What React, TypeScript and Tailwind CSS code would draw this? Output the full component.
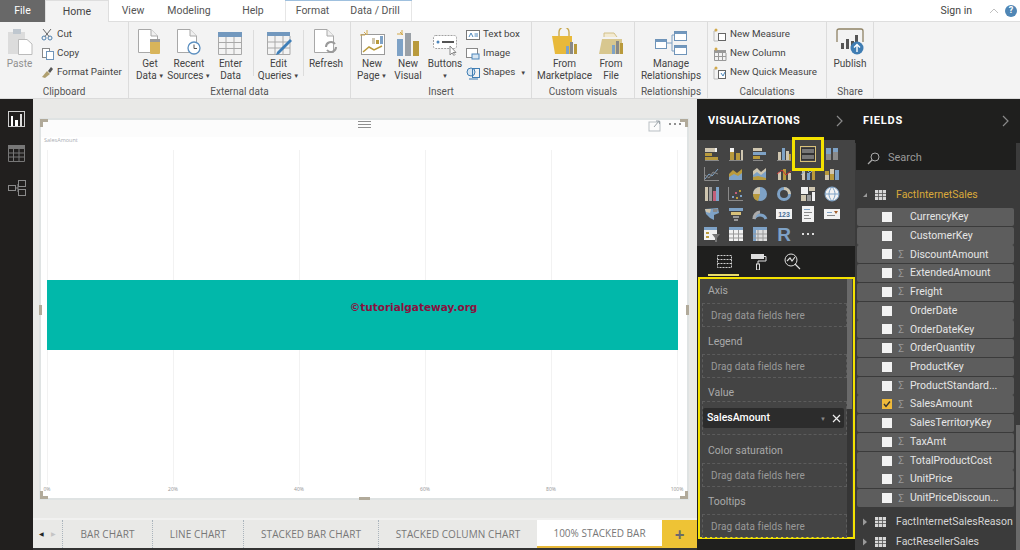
import React from "react";

const G = "#b99a3c", B = "#7ea2c6", T = "#cfc6b0", W = "#f2f2f2", D = "#8a8a8a";
const Svg = ({ s = 16, w, h, vb, children }: { s?: number; w?: number; h?: number; vb?: string; children: React.ReactNode }) => (
  <svg width={w ?? s} height={h ?? s} viewBox={vb ?? `0 0 ${w ?? s} ${h ?? s}`} fill="none" className="block shrink-0">{children}</svg>
);
const R = (x: number, y: number, w: number, h: number, c: string) => <rect x={x} y={y} width={w} height={h} fill={c} />;

const Doc = ({ children }: { children?: React.ReactNode }) => (
  <Svg w={26} h={28}>
    <path d="M1.5 1.5H14L20.5 8V24.5H1.5Z" fill="#fff" stroke="#a8a8a8" />
    <path d="M14 1.5V8H20.5" stroke="#a8a8a8" fill="#f0f0f0" />
    {children}
  </Svg>
);
const ico: Record<string, React.ReactNode> = {
  paste: (
    <Svg w={26} h={28}>
      <rect x="1" y="4" width="17" height="22" fill="#dcdcdc" />
      <rect x="6" y="1" width="8" height="5" fill="#bfc7cf" />
      <path d="M11.5 11.5H20L25 16V26.5H11.5Z" fill="#fff" stroke="#bbb" />
    </Svg>
  ),
  data: (
    <Doc>
      <rect x="13" y="11" width="10" height="15" rx="1" fill="#d8b45a" />
      <rect x="13" y="11" width="10" height="3" fill="#9a9a9a" />
    </Doc>
  ),
  recent: (
    <Doc>
      <circle cx="18" cy="20" r="6" fill="#fff" stroke="#5b8fc0" strokeWidth="1.3" />
      <path d="M18 16.5V20.5H21" stroke="#555" />
    </Doc>
  ),
  enter: (
    <Svg w={25} h={24}>
      {R(0, 0, 24, 5, "#7298be")}
      <path d="M.5 5V22.5H23.5V5M.5 10.5H23.5M.5 16.5H23.5M8 5V22.5M16 5V22.5" stroke="#a9a9a9" />
    </Svg>
  ),
  edit: (
    <Svg w={26} h={25}>
      {R(1, 1, 23, 4, "#7298be")}
      <path d="M1.5 5V23.5H24V5M1.5 11H24M1.5 17H24M9 5V23.5M17 5V23.5" stroke="#a9a9a9" />
      <path d="M11 21L24 8L26 10L13 23L10 24Z" fill="#3f7fb8" />
    </Svg>
  ),
  refresh: (
    <Doc>
      <path d="M13 19a5 5 0 0 1 9-3M23 19a5 5 0 0 1-9 3" stroke="#9a9a9a" strokeWidth="2" />
    </Doc>
  ),
  newpage: (
    <Svg w={26} h={27}>
      <rect x="2.5" y="5.5" width="23" height="20" fill="#fff" stroke="#9a9a9a" />
      <path d="M5 3l3 3M8 1v5M1 6h5" stroke="#d2a94b" />
      {R(13, 9, 3, 6, T)}{R(17, 11, 3, 4, G)}{R(21, 7, 3, 8, B)}
      <path d="M4 23L10 18L15 21L23 17" stroke={G} strokeWidth="1.5" />
    </Svg>
  ),
  newvisual: (
    <Svg w={24} h={27}>
      <path d="M4 3l3 3M6 1v5M1 5h5" stroke="#d2a94b" />
      {R(1, 10, 6, 17, B)}{R(9, 4, 6, 23, "#9aa0a6")}{R(17, 12, 6, 15, G)}
    </Svg>
  ),
  buttons: (
    <Svg w={26} h={22}>
      <rect x="1.5" y="1.5" width="23" height="13" rx="2" fill="#fff" stroke="#a0a0a0" strokeDasharray="2 1" />
      <circle cx="6" cy="8" r="1.5" fill="#4c86bb" />
      {R(10, 7, 12, 2, "#555")}
      <path d="M18 12V21L20 19L22 21.5L23 20.5L21 18.5H24Z" fill="#fff" stroke="#888" />
    </Svg>
  ),
  market: (
    <Svg w={27} h={28}>
      <path d="M8 8V4a5 5 0 0 1 10 0V8" stroke="#c9a94e" strokeWidth="1.4" />
      <path d="M1 8H21V26H4Z" fill="#e8b93a" />
      {R(15, 18, 3, 8, B)}{R(19, 14, 3, 12, "#888")}{R(23, 16, 3, 10, G)}
    </Svg>
  ),
  file: (
    <Svg w={26} h={24}>
      <path d="M1 22L4 7H24V22Z" fill="#d8c78f" />
      <path d="M6 5V1H16L19 5" fill="#f3ead0" stroke="#d2c089" />
      {R(14, 13, 3, 9, B)}{R(18, 9, 3, 13, "#888")}{R(22, 11, 3, 11, G)}
    </Svg>
  ),
  manage: (
    <Svg w={33} h={26}>
      <path d="M12 13H17M17 5H19M17 21H19M17 5V21" stroke="#7d9fc2" />
      {R(0, 9, 12, 10, "#fff")}<rect x=".5" y="9.5" width="11" height="9" stroke="#6f94b9" />{R(1, 10, 10, 2, "#7298be")}
      {R(19, 1, 13, 10, "#fff")}<rect x="19.5" y="1.5" width="12" height="9" stroke="#6f94b9" />{R(20, 2, 11, 2, "#7298be")}
      {R(19, 15, 13, 10, "#fff")}<rect x="19.5" y="15.5" width="12" height="9" stroke="#6f94b9" />{R(20, 16, 11, 2, "#7298be")}
    </Svg>
  ),
  publish: (
    <Svg w={30} h={28}>
      <path d="M2 14V3Q2 1 4 1H26Q28 1 28 3V14" stroke="#8f8264" strokeWidth="1.3" />
      {R(6, 15, 3, 6, "#555")}{R(11, 11, 3, 10, "#555")}{R(16, 13, 3, 8, "#555")}{R(20, 7, 3, 14, "#555")}
      <circle cx="22" cy="20" r="6.5" fill="#3f7db3" />
      <path d="M22 24V17M19 19.5L22 16.5L25 19.5" stroke="#fff" strokeWidth="1.4" />
    </Svg>
  ),
};

const Btn = ({ w, icon, l1, l2, drop, dim }: { w: number; icon: React.ReactNode; l1: string; l2?: string; drop?: boolean; dim?: boolean }) => (
  <div className={`flex flex-col items-center shrink-0 ${dim ? "text-[#909090]" : "text-[#444]"}`} style={{ width: w }}>
    <div className="h-[28px] flex items-end justify-center">{icon}</div>
    <div className="mt-[2px] text-[10px] leading-[11.5px] text-center whitespace-nowrap">
      <div>{l1}</div>
      <div>
        {l2}
        {drop && <span className="text-[6px] align-[1px]"> ▼</span>}
      </div>
    </div>
  </div>
);

const Small = ({ icon, text, drop }: { icon: React.ReactNode; text: string; drop?: boolean }) => (
  <div className="h-[19px] flex items-center gap-[3px] text-[9.8px] text-[#444] whitespace-nowrap">
    <div className="w-[14px] flex justify-center">{icon}</div>
    {text}
    {drop && <span className="text-[6px] ml-[2px]">▼</span>}
  </div>
);

const Group = ({ w, label, children }: { w: number; label: string; children: React.ReactNode }) => (
  <div className="shrink-0 h-[76px] flex flex-col border-r border-[#dcdcdc]" style={{ width: w }}>
    <div className="h-[65px] pt-[6px] flex items-start">{children}</div>
    <div className="text-[10px] leading-[13px] text-center text-[#555] whitespace-nowrap">{label}</div>
  </div>
);
const Sep = () => <div className="w-px h-[46px] mt-[2px] bg-[#dcdcdc] shrink-0" />;

const Tab = ({ w, t, cls = "" }: { w: number; t: string; cls?: string }) => (
  <div className={`h-full flex items-center justify-center shrink-0 text-[10.5px] text-[#555] ${cls}`} style={{ width: w }}>{t}</div>
);

const Ribbon = () => (
  <div className="h-[77px] bg-[#f3f3f3] border-b border-[#dadada] flex shrink-0 font-['Roboto',sans-serif]">
    <Group w={129} label="Clipboard">
      <div className="ml-[2px]"><Btn w={35} icon={ico.paste} l1="Paste" dim /></div>
      <div className="ml-[3px] -mt-[3px]">
        <Small text="Cut" icon={<Svg s={13}><circle cx="3" cy="10" r="2" stroke="#4c7fae" /><circle cx="9" cy="10" r="2" stroke="#4c7fae" /><path d="M4 8.5L10 1M8 8.5L2 1" stroke="#666" /></Svg>} />
        <Small text="Copy" icon={<Svg s={13}><rect x="1.5" y="1.5" width="7" height="9" fill="#fff" stroke="#888" /><rect x="5.5" y="4.5" width="7" height="8" fill="#fff" stroke="#6f94b9" /></Svg>} />
        <Small text="Format Painter" icon={<Svg s={13}><path d="M1 11L6 5L9 8L4 12Z" fill="#b0a070" /><path d="M7 5L10 1L12 3L9 7Z" fill="#555" /></Svg>} />
      </div>
    </Group>
    <Group w={222} label="External data">
      <div className="w-px" />
      <Btn w={40} icon={ico.data} l1="Get" l2="Data" drop />
      <Btn w={38} icon={ico.recent} l1="Recent" l2="Sources" drop />
      <Btn w={45} icon={ico.enter} l1="Enter" l2="Data" />
      <Sep />
      <Btn w={49} icon={ico.edit} l1="Edit" l2="Queries" drop />
      <Sep />
      <Btn w={44} icon={ico.refresh} l1="Refresh" />
    </Group>
    <Group w={181} label="Insert">
      <div className="w-[3px]" />
      <Btn w={36} icon={ico.newpage} l1="New" l2="Page" drop />
      <Btn w={36} icon={ico.newvisual} l1="New" l2="Visual" />
      <Btn w={38} icon={ico.buttons} l1="Buttons" l2="" drop />
      <div className="ml-[2px] -mt-[3px]">
        <Small text="Text box" icon={<Svg s={14}><rect x=".5" y="2.5" width="13" height="9" fill="#fff" stroke="#777" /><path d="M3 9L5 5L7 9M8.5 6H12M8.5 8H12" stroke="#4c86bb" /></Svg>} />
        <Small text="Image" icon={<Svg s={14}><rect x=".5" y="1.5" width="11" height="9" fill="#fff" stroke="#888" /><rect x="6" y="7" width="7" height="5" fill="#d8e6f2" stroke="#4c86bb" /></Svg>} />
        <Small text="Shapes" drop icon={<Svg s={14}><circle cx="5" cy="6" r="4" fill="#d8e6f2" stroke="#3f7db3" /><rect x="6.5" y="2.5" width="7" height="9" stroke="#3f7db3" /><path d="M3 13H12" stroke="#3f7db3" /></Svg>} />
      </div>
    </Group>
    <Group w={103} label="Custom visuals">
      <Btn w={65} icon={ico.market} l1="From" l2="Marketplace" />
      <Btn w={28} icon={ico.file} l1="From" l2="File" />
    </Group>
    <Group w={73} label="Relationships">
      <Btn w={72} icon={ico.manage} l1="Manage" l2="Relationships" />
    </Group>
    <Group w={119} label="Calculations">
      <div className="ml-[5px] -mt-[3px]">
        <Small text="New Measure" icon={<Svg s={14}><path d="M3 3H1V13H5" stroke="#bbb" /><rect x="5.5" y="5.5" width="7" height="7" fill="#fff" stroke="#666" /><circle cx="3" cy="2" r="1.5" fill="#d2a94b" /></Svg>} />
        <Small text="New Column" icon={<Svg s={14}>{R(1, 3, 12, 3, "#999")}<path d="M1.5 6V13.5H13V6M1.5 9.5H13M5.5 6V13.5M9.5 6V13.5" stroke="#999" /><circle cx="3" cy="2" r="1.5" fill="#d2a94b" /></Svg>} />
        <Small text="New Quick Measure" icon={<Svg s={14}><path d="M3 3H1V13H5" stroke="#bbb" /><rect x="5.5" y="4.5" width="7" height="8" fill="#fff" stroke="#666" /><path d="M8 7L10 10L12 6" stroke="#4c86bb" /><circle cx="3" cy="2" r="1.5" fill="#d2a94b" /></Svg>} />
      </div>
    </Group>
    <Group w={47} label="Share">
      <Btn w={46} icon={ico.publish} l1="Publish" />
    </Group>
  </div>
);

const TopBar = () => (
  <div className="h-[22px] flex bg-white border-b border-[#dedede] shrink-0 font-['Roboto',sans-serif] relative">
    <div className="w-[45px] h-[22px] bg-[#686868] text-white text-[10.5px] flex items-center justify-center shrink-0">File</div>
    <div className="w-[64px] h-[22px] bg-[#f3f3f3] border-t border-x border-[#dedede] text-[10.5px] text-[#444] flex items-center justify-center shrink-0">Home</div>
    <Tab w={48} t="View" />
    <Tab w={64} t="Modeling" />
    <Tab w={64} t="Help" />
    <div className="flex h-[22px] border-t-[2px] border-[#9fc0de] -mt-px shrink-0">
      <Tab w={54} t="Format" cls="bg-white border-l border-[#e6e6e6]" />
      <Tab w={73} t="Data / Drill" cls="bg-white border-r border-[#e6e6e6]" />
    </div>
    <div className="flex-1" />
    <div className="text-[10.5px] text-[#444] flex items-center mr-[17px]">Sign in</div>
    <div className="flex items-center mr-[6px]"><Svg w={10} h={6}><path d="M1 5L5 1L9 5" stroke="#c0c0c0" /></Svg></div>
    <div className="flex items-center mr-[3px]"><div className="w-[12px] h-[12px] rounded-full bg-[#4f86b5] text-white text-[9px] font-bold flex items-center justify-center">?</div></div>
  </div>
);

const Nav = () => (
  <div className="w-[33px] bg-[#211f1e] shrink-0 flex flex-col items-center pt-[12px] gap-[18px]">
    <div className="w-[17px] h-[16px] border border-[#cfcfcf] flex items-end justify-center gap-[2px] px-[2px]">
      <div className="w-[3px] h-[10px] bg-white" /><div className="w-[3px] h-[6px] bg-white" /><div className="w-[3px] h-[12px] bg-[#ddd]" />
    </div>
    <Svg w={17} h={17}>
      {R(0, 0, 17, 4, "#777")}
      <path d="M.5 4V16.5H16.5V4M.5 8H16.5M.5 12H16.5M5.5 4V16.5M11 4V16.5" stroke="#777" />
    </Svg>
    <Svg w={18} h={16}>
      <rect x=".5" y="5.5" width="7" height="5" stroke="#8a8a8a" />
      <rect x="10.5" y=".5" width="7" height="6" stroke="#8a8a8a" />
      <rect x="10.5" y="9.5" width="7" height="6" stroke="#8a8a8a" />
      <path d="M8 8H10V4M10 8V12" stroke="#8a8a8a" />
    </Svg>
  </div>
);

const Handle = ({ cls }: { cls: string }) => <div className={`absolute bg-[#b1aa9a] ${cls}`} />;

const Visual = () => (
  <div className="relative w-[650px] h-[382px] bg-white border-2 border-[#dfe3e3] flex flex-col">
    <Handle cls="left-[-1px] top-[-1px] w-[8px] h-[3px]" />
    <Handle cls="left-[-1px] top-[-1px] w-[3px] h-[8px]" />
    <Handle cls="right-[-1px] top-[-1px] w-[8px] h-[3px]" />
    <Handle cls="right-[-1px] top-[-1px] w-[3px] h-[8px]" />
    <Handle cls="left-[-1px] bottom-[-1px] w-[8px] h-[3px]" />
    <Handle cls="left-[-1px] bottom-[-1px] w-[3px] h-[8px]" />
    <Handle cls="right-[-1px] bottom-[-1px] w-[8px] h-[3px]" />
    <Handle cls="right-[-1px] bottom-[-1px] w-[3px] h-[8px]" />
    <Handle cls="left-[-2px] top-[185px] w-[3px] h-[10px]" />
    <Handle cls="right-[-2px] top-[185px] w-[3px] h-[10px]" />
    <Handle cls="left-[318px] bottom-[-2px] w-[11px] h-[3px]" />
    <div className="absolute left-[317px] top-[1px] w-[13px] h-[7px] border-y border-[#8f8f8f] flex items-center"><div className="w-full h-px bg-[#8f8f8f]" /></div>
    <div className="h-[17px] bg-[#fcfcfc] flex items-start justify-end pr-[6px] gap-[8px] shrink-0">
      <div>
        <Svg s={13}><rect x="1" y="2" width="11" height="9" stroke="#b9bfc4" /><path d="M6 7L11 1M8 1H11.5V4" stroke="#9aa2a8" /></Svg>
      </div>
      <div className="flex gap-[3px] mt-[3px]"><div className="w-[2px] h-[2px] bg-[#909090]" /><div className="w-[2px] h-[2px] bg-[#909090]" /><div className="w-[2px] h-[2px] bg-[#909090]" /></div>
    </div>
    <div className="text-[5.5px] leading-[6px] text-[#a9adb2] pl-[3px] h-[6px] font-['Open_Sans',sans-serif]">SalesAmount</div>
    <div className="relative flex-1 ml-[6px] mt-[7px] mb-[13px] w-[631px]">
      <div className="absolute inset-0 flex justify-between">
        {[0, 1, 2, 3, 4, 5].map((i) => <div key={i} className="w-px bg-[#f2f2f2] relative">
          <div className="absolute top-[336px] left-[-15px] w-[30px] text-center text-[5px] leading-[6px] text-[#999]">{i * 20}%</div>
        </div>)}
      </div>
      <div className="relative mt-[130px] h-[70px] bg-[#01b8aa] flex items-center justify-center">
        <span className="text-[10.5px] font-bold text-[#8a1140] font-['DejaVu_Sans',sans-serif] relative left-[51px] -top-[7px] whitespace-nowrap">©tutorialgateway.org</span>
      </div>
    </div>
  </div>
);

const sheets = [
  { w: 90, t: "BAR CHART" },
  { w: 91, t: "LINE CHART" },
  { w: 135, t: "STACKED BAR CHART" },
  { w: 159, t: "STACKED COLUMN CHART" },
];

const SheetTabs = () => (
  <div className="h-[30px] flex bg-[#e9e9e7] shrink-0 font-['Open_Sans',sans-serif] border-t-[2px] border-[#f1f1f0]">
    <div className="w-[29px] flex items-center justify-center gap-[7px] text-[6px] shrink-0">
      <span className="text-[#222]">◀</span><span className="text-[#c4c4c4]">▶</span>
    </div>
    {sheets.map((s) => (
      <div key={s.t} className="border-l border-dotted border-[#aab4bc] flex items-center justify-center text-[10px] tracking-[0.1px] text-[#777] shrink-0 whitespace-nowrap" style={{ width: s.w }}>{s.t}</div>
    ))}
    <div className="w-[125px] bg-white border-b-2 border-[#e8b93a] flex items-center justify-center text-[10px] text-[#777] whitespace-nowrap shrink-0">100% STACKED BAR</div>
    <div className="flex-1 bg-[#eec335] flex items-center justify-center text-[#6a6a6a] text-[17px] font-bold leading-none">+</div>
  </div>
);

const S = ({ children }: { children: React.ReactNode }) => <Svg s={16}>{children}</Svg>;
const vizIcons: React.ReactNode[] = [
  <S>{R(1, 2, 10, 4, T)}{R(11, 2, 2, 4, W)}{R(1, 7, 7, 3, G)}{R(1, 11, 13, 3, G)}{R(1, 14, 14, 1, D)}</S>,
  <S>{R(2, 2, 4, 12, G)}{R(2, 2, 4, 4, W)}{R(8, 7, 4, 7, G)}{R(13, 4, 2, 10, T)}{R(1, 14, 14, 1, D)}</S>,
  <S>{R(1, 2, 9, 3, T)}{R(1, 6, 13, 3, B)}{R(1, 10, 7, 3, G)}{R(1, 14, 10, 1, D)}</S>,
  <S>{R(2, 6, 3, 8, T)}{R(6, 2, 3, 12, B)}{R(10, 5, 3, 9, T)}{R(13, 8, 2, 6, G)}{R(1, 14, 14, 1, D)}</S>,
  <S>{R(1, 2, 14, 12, "#333")}{R(2, 3, 12, 4, "#777")}{R(2, 9, 12, 4, "#777")}<rect x=".5" y=".5" width="15" height="15" stroke="#d9c27a" /></S>,
  <S>{R(2, 2, 5, 12, B)}{R(2, 8, 5, 6, "#8a8a8a")}{R(9, 2, 5, 12, B)}{R(9, 6, 5, 8, "#8a8a8a")}</S>,
  <S><path d="M1 13L5 8L8 10L14 3" stroke={B} /><path d="M1 9L5 12L9 6L14 8" stroke="#888" /><path d="M.5 1V14.5H15" stroke={D} /></S>,
  <S><path d="M1 14V8L5 4L9 7L14 3V14Z" fill={G} /><path d="M1 14V11L6 8L10 10L14 7V14Z" fill={B} /></S>,
  <S><path d="M1 14V5L5 2L9 6L14 2V14Z" fill={T} /><path d="M1 14V9L5 6L9 9L14 5V14Z" fill={B} /><path d="M1 14V11L6 10L14 12V14Z" fill={G} /></S>,
  <S>{R(2, 6, 3, 8, T)}{R(7, 3, 3, 11, G)}{R(12, 7, 3, 7, T)}<path d="M1 8L6 4L10 9L15 5" stroke="#c33" /></S>,
  <S>{R(2, 5, 3, 9, T)}{R(7, 7, 3, 7, B)}{R(12, 4, 3, 10, G)}<path d="M1 9L6 3L10 7L15 2" stroke={B} /></S>,
  <S>{R(1, 5, 4, 9, G)}{R(6, 3, 4, 11, T)}{R(11, 4, 4, 10, B)}{R(1, 9, 4, 5, T)}{R(6, 8, 4, 6, G)}</S>,
  <S>{R(1, 1, 3, 14, T)}{R(5, 1, 3, 14, "#999")}{R(9, 5, 3, 10, "#c2607a")}{R(12, 1, 3, 14, B)}</S>,
  <S><path d="M.5 1V14.5H15" stroke={D} />{R(4, 10, 2, 2, B)}{R(7, 6, 2, 2, "#c2607a")}{R(11, 4, 2, 2, G)}{R(12, 9, 2, 2, B)}{R(8, 11, 2, 2, G)}</S>,
  <S><circle cx="8" cy="8" r="7" fill={B} /><path d="M8 8V1A7 7 0 0 0 1 8Z" fill={T} /><path d="M8 8H1A7 7 0 0 0 6 15Z" fill={G} /></S>,
  <S><circle cx="8" cy="8" r="5.5" stroke={B} strokeWidth="3" /><path d="M8 2.5A5.5 5.5 0 0 1 13.5 8" stroke={T} strokeWidth="3" /></S>,
  <S>{R(1, 1, 7, 7, W)}{R(9, 1, 6, 4, T)}{R(1, 9, 5, 6, T)}{R(7, 9, 4, 6, "#999")}{R(12, 6, 3, 9, W)}</S>,
  <S><circle cx="8" cy="8" r="7" fill={W} stroke={B} /><path d="M1 8H15M8 1C4 5 4 11 8 15M8 1C12 5 12 11 8 15" stroke={B} /></S>,
  <S><path d="M1 3L14 2L15 7L10 9L10 14L6 12L2 8Z" fill={B} /><path d="M1 3L7 3L6 7L2 6Z" fill={T} /><path d="M9 3L14 3L13 6L9 6Z" fill="#888" /></S>,
  <S>{R(1, 2, 14, 3, B)}{R(3, 6, 10, 3, "#d9c27a")}{R(5, 10, 6, 2, "#999")}{R(6, 13, 4, 2, "#999")}</S>,
  <S><path d="M2 13A6.5 6.5 0 0 1 14 13" stroke={B} strokeWidth="3" /><path d="M2 13A6.5 6.5 0 0 1 8 6" stroke="#aaa" strokeWidth="3" /></S>,
  <S>{R(0, 3, 16, 10, W)}<text x="8" y="11" textAnchor="middle" fontSize="7" fontFamily="Liberation Sans" fill="#4a6f96" fontWeight="700">123</text></S>,
  <S>{R(2, 0, 12, 16, W)}{R(4, 3, 6, 1, B)}{R(4, 6, 8, 1, "#888")}{R(4, 9, 5, 1, "#888")}{R(4, 12, 7, 1, "#888")}</S>,
  <S>{R(0, 3, 16, 10, W)}{R(3, 6, 5, 1, B)}{R(3, 9, 8, 1, "#888")}<path d="M10 5H14L12 8Z" fill="#a6602f" /></S>,
  <S>{R(0, 1, 13, 13, W)}{R(0, 1, 13, 3, B)}{R(2, 6, 3, 2, G)}{R(2, 10, 3, 2, G)}<path d="M8 8H16L13 12V16H11V12Z" fill="#777" /></S>,
  <S>{R(1, 1, 14, 14, W)}{R(1, 1, 14, 3, B)}<path d="M1 8H15M1 12H15M5.5 4V15M10.5 4V15" stroke="#999" /></S>,
  <S>{R(1, 1, 14, 14, "#ddd")}{R(1, 1, 14, 3, B)}{R(1, 1, 3, 14, B)}<path d="M1 8H15M1 12H15M6 4V15M11 4V15" stroke="#999" /></S>,
  <div className="w-[16px] h-[16px] flex items-center justify-center text-[19px] leading-none font-bold text-[#7ea2c6] font-['Liberation_Sans',sans-serif]">R</div>,
  <div className="w-[16px] h-[16px] flex items-center justify-center gap-[3px]"><div className="w-[2px] h-[2px] bg-[#ddd]" /><div className="w-[2px] h-[2px] bg-[#ddd]" /><div className="w-[2px] h-[2px] bg-[#ddd]" /></div>,
];

const Well = ({ label, children, mt = 0 }: { label: string; children?: React.ReactNode; mt?: number }) => (
  <div style={{ marginTop: mt }}>
    <div className="h-[20px] flex items-center text-[10.5px] text-[#a9a9a9] pl-[8px]">{label}</div>
    {children ?? (
      <div className="h-[24px] mt-[2px] ml-[2px] w-[145px] border border-dashed border-[#5c5c5c] flex items-center pl-[8px] text-[10px] tracking-[0.1px] text-[#999]">Drag data fields here</div>
    )}
  </div>
);

const VizPanel = () => (
  <div className="w-[158px] shrink-0 flex flex-col bg-[#1f1f1e] font-['Roboto',sans-serif] relative">
    <div className="h-[41px] flex items-center justify-between pl-[11px] pr-[12px] pt-[3px] shrink-0">
      <span className="text-white text-[11px] font-bold tracking-[0.4px]">VISUALIZATIONS</span>
      <Svg w={7} h={12}><path d="M1 1L6 6L1 11" stroke="#8a8a8a" strokeWidth="1.2" /></Svg>
    </div>
    <div className="h-[106px] bg-[#444444] pl-[7px] pt-[4px] grid grid-cols-[repeat(6,24px)] auto-rows-[20px] items-center justify-items-start shrink-0 relative">
      {vizIcons.map((v, i) => <div key={i}>{v}</div>)}
      <div className="absolute left-[95px] top-[-3px] w-[32px] h-[34px] border-[3px] border-[#f4e200]" />
    </div>
    <div className="h-[31px] shrink-0 flex items-center pl-[19px] gap-[17px]">
      <Svg s={17}><rect x="1.5" y="2.5" width="14" height="12" stroke="#cfcfcf" strokeDasharray="2 1" /><path d="M1.5 6.5H15.5M1.5 10.5H15.5" stroke="#cfcfcf" strokeDasharray="2 1" /></Svg>
      <Svg s={17}><rect x="1" y="1" width="13" height="5" fill="#ddd" /><path d="M14 3.5H16V8H8V11" stroke="#ddd" /><rect x="6.5" y="11" width="3" height="6" stroke="#ddd" /></Svg>
      <Svg s={17}><circle cx="7" cy="7" r="6" stroke="#ddd" /><path d="M3 8L6 5L8 8L11 4M11 11L16 16" stroke="#ddd" strokeWidth="1.2" /></Svg>
      <div className="absolute left-[11px] top-[175px] w-[31px] h-[2px] bg-[#e8dc6a]" />
    </div>
    <div className="h-[262px] w-[157px] ml-[1px] pt-[2px] shrink-0 border-[2.5px] border-[#f4e200] bg-[#444444] relative">
      <div className="absolute right-[1px] top-0 bottom-0 w-[5px] bg-[#353535]"><div className="w-full h-[130px] bg-[#6a6a6a]" /></div>
      <Well label="Axis" />
      <Well label="Legend" mt={5} />
      <Well label="Value" mt={5}>
        <div className="h-[33px] relative">
          <div className="absolute left-[2px] top-[-2px] w-[145px] h-[34px] border border-dashed border-[#5c5c5c]" />
          <div className="absolute left-[3px] top-[5px] w-[141px] h-[20px] bg-[#2c2c2c] rounded-[2px] flex items-center pl-[4px] pr-[3px] text-[10.5px] text-white font-medium">
            <span className="flex-1">SalesAmount</span>
            <span className="text-[6px] text-[#888] mr-[6px]">▼</span>
            <Svg s={9}><path d="M1 1L8 8M8 1L1 8" stroke="#eee" strokeWidth="1.2" /></Svg>
          </div>
        </div>
      </Well>
      <Well label="Color saturation" mt={5} />
      <Well label="Tooltips" mt={5} />
    </div>
    <div className="flex-1" />
  </div>
);

const fields: [string, boolean, boolean?][] = [
  ["CurrencyKey", false],
  ["CustomerKey", false],
  ["DiscountAmount", true],
  ["ExtendedAmount", true],
  ["Freight", true],
  ["OrderDate", false],
  ["OrderDateKey", true],
  ["OrderQuantity", true],
  ["ProductKey", false],
  ["ProductStandard...", true],
  ["SalesAmount", true, true],
  ["SalesTerritoryKey", false],
  ["TaxAmt", true],
  ["TotalProductCost", true],
  ["UnitPrice", true],
  ["UnitPriceDiscoun...", true],
];

const TableIco = () => (
  <Svg w={11} h={10}>
    {R(0, 0, 11, 10, "#d8d8d8")}
    <path d="M0 3.5H11M0 6.5H11M3.5 0V10M7.5 0V10" stroke="#555" strokeWidth=".8" />
  </Svg>
);

const FieldPanel = () => (
  <div className="w-[165px] shrink-0 flex flex-col bg-[#3b3b3b] font-['Roboto',sans-serif] relative">
    <div className="h-[44px] bg-[#1f1f1e] flex items-center justify-between pl-[8px] pr-[11px] shrink-0">
      <span className="text-white text-[11px] font-bold tracking-[0.8px]">FIELDS</span>
      <Svg w={7} h={12}><path d="M1 1L6 6L1 11" stroke="#8a8a8a" strokeWidth="1.2" /></Svg>
    </div>
    <div className="h-[27px] ml-[1px] w-[160px] bg-[#1f1f1e] flex items-center pl-[11px] pt-[3px] gap-[8px] text-[11px] text-[#999] shrink-0">
      <Svg s={13}><circle cx="8" cy="5" r="4" stroke="#aaa" /><path d="M5 8L1 12" stroke="#aaa" strokeWidth="1.3" /></Svg>
      Search
    </div>
    <div className="h-[16px] shrink-0" />
    <div className="h-[18px] flex items-center pl-[7px] text-[10.5px] text-[#d9a93a] shrink-0">
      <span className="w-[6px] h-[6px] mr-[7px]"><Svg s={6}><path d="M5 1V5H1Z" fill="#9a9a9a" /></Svg></span>
      <TableIco />
      <span className="ml-[10px]">FactInternetSales</span>
    </div>
    <div className="flex flex-col gap-[0.74px] mt-[4px] ml-[2px] w-[157px]">
      {fields.map(([n, sig, chk]) => (
        <div key={n} className="h-[18px] bg-[#5d5d5d] rounded-[2px] flex items-center text-[10.5px] text-[#e6e6e6] whitespace-nowrap">
          <div className={`ml-[25px] w-[10px] h-[10px] flex items-center justify-center ${chk ? "bg-[#eeb93a]" : "bg-[#f2f2f2]"}`}>
            {chk && <Svg s={8}><path d="M1 4L3 6.5L7 1.5" stroke="#333" strokeWidth="1.4" /></Svg>}
          </div>
          <div className="w-[18px] text-center text-[10px] text-[#9a9a9a]">{sig ? "Σ" : ""}</div>
          <span>{n}</span>
        </div>
      ))}
    </div>
    {["FactInternetSalesReason", "FactResellerSales"].map((t, i) => (
      <div key={t} className={`h-[20px] flex items-center pl-[7px] text-[10.5px] text-[#d5d5d5] shrink-0 ${i === 0 ? "mt-[5px]" : ""}`}>
        <span className="w-[6px] h-[8px] mr-[7px]"><Svg w={6} h={8}><path d="M1 0.5L5 4L1 7.5Z" fill="#9a9a9a" /></Svg></span>
        <TableIco />
        <span className="ml-[10px] whitespace-nowrap">{t}</span>
      </div>
    ))}
    <div className="absolute right-0 bottom-0 w-[4px] h-[125px] bg-[#6a6a6a]" />
  </div>
);

export default function App() {
  return (
    <div className="w-[1020px] h-[550px] flex flex-col overflow-hidden bg-[#e9e9e7]">
      <TopBar />
      <Ribbon />
      <div className="flex-1 flex min-h-0">
        <Nav />
        <div className="w-[664px] shrink-0 flex flex-col bg-[#e9e9e7]">
          <div className="flex-1 pl-[6px] pt-[19px]"><Visual /></div>
          <SheetTabs />
          <div className="h-[2px] bg-[#333] shrink-0" />
        </div>
        <VizPanel />
        <FieldPanel />
      </div>
    </div>
  );
}
